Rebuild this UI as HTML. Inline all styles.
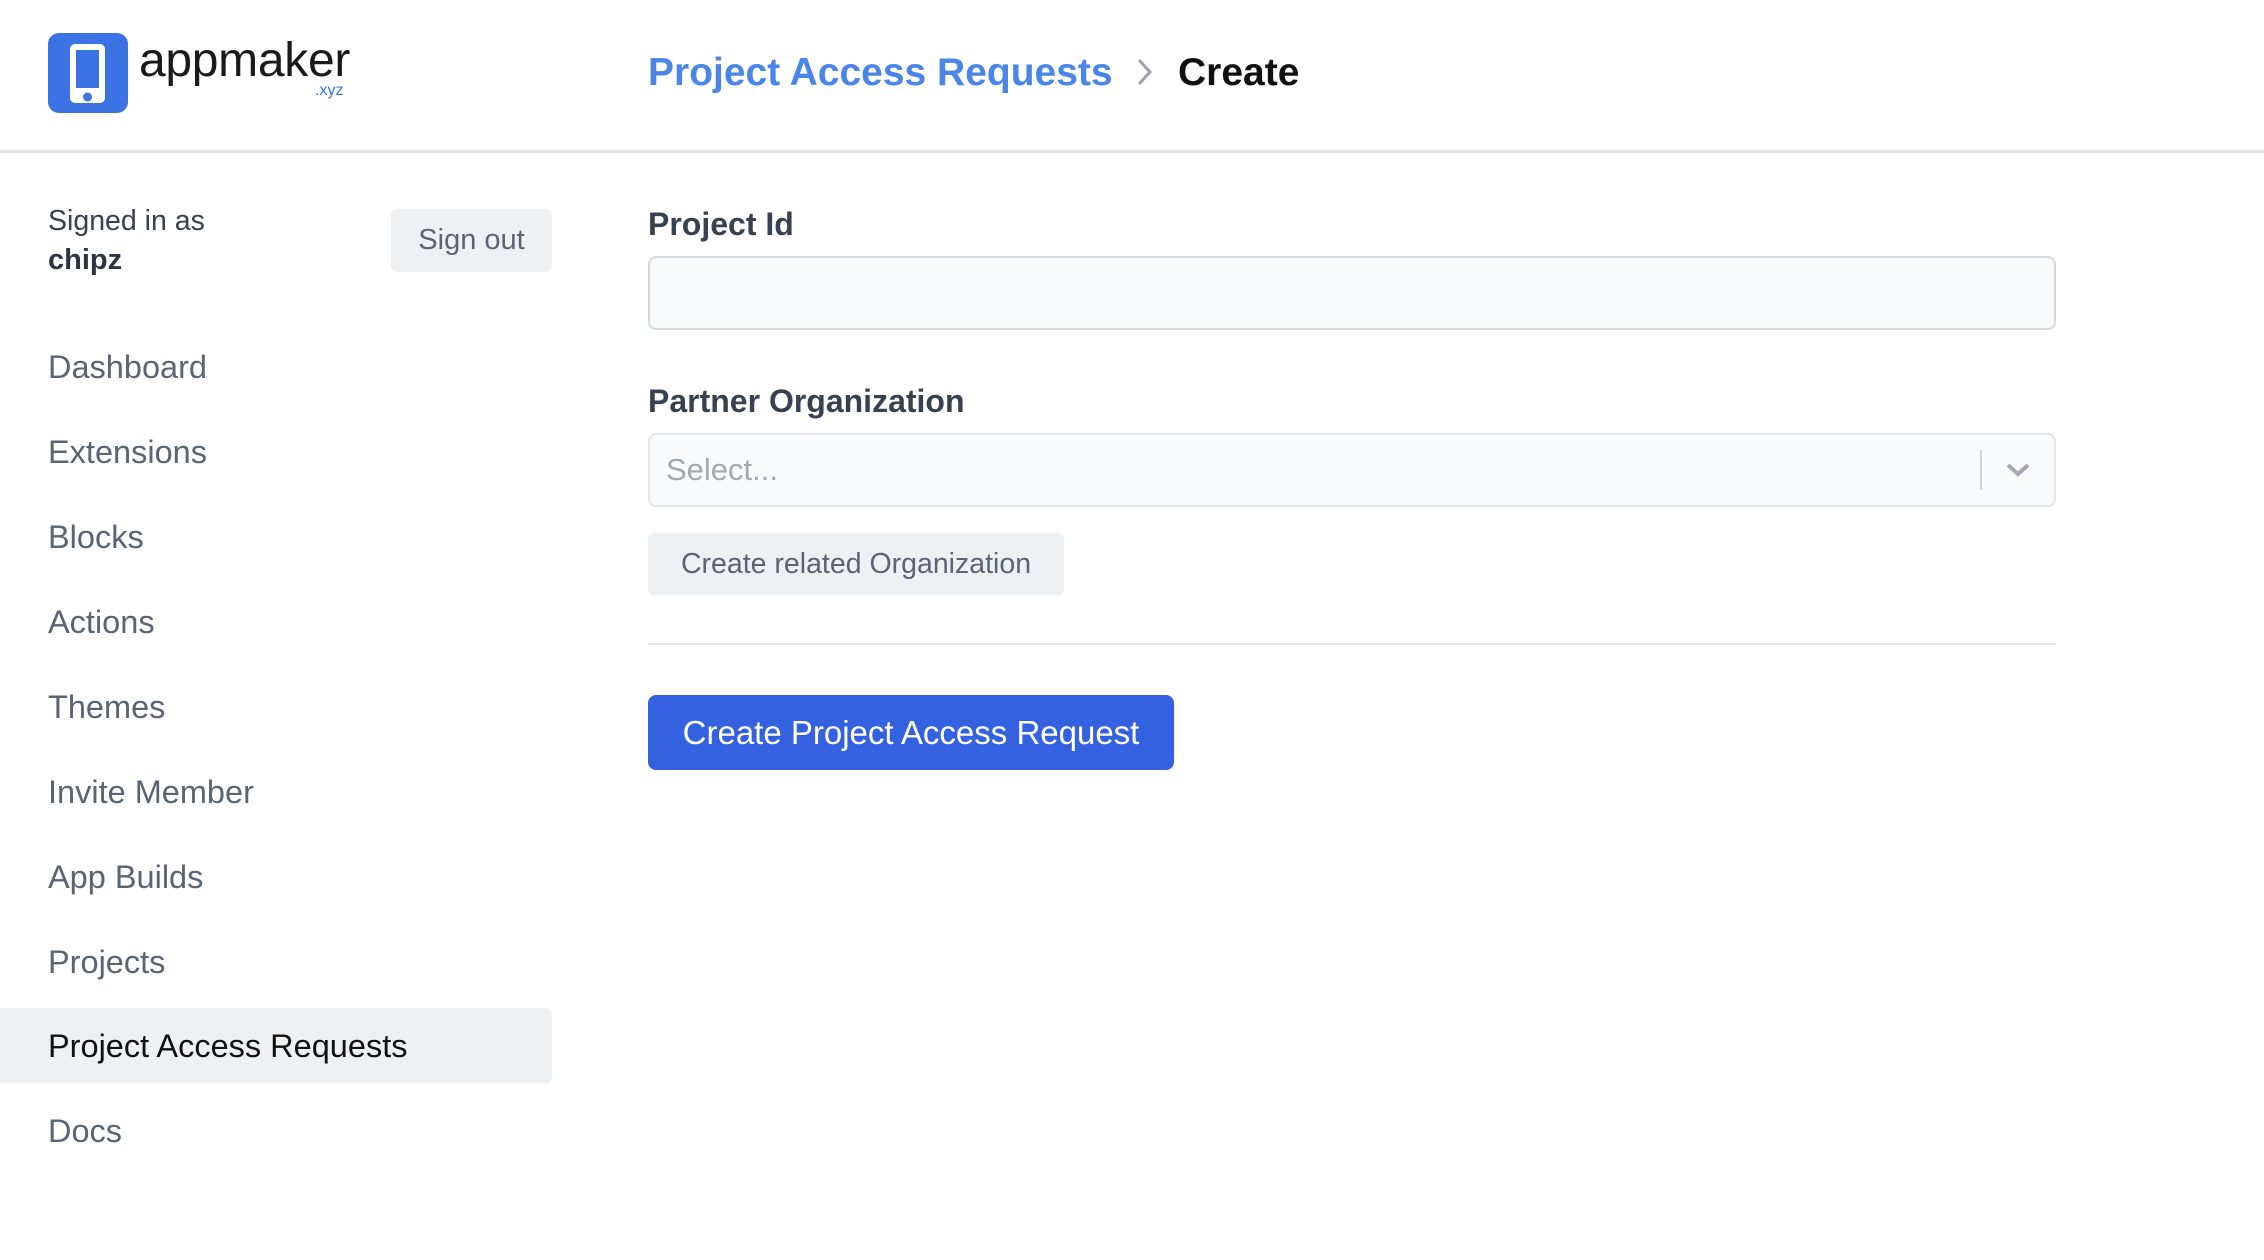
<!DOCTYPE html>
<html><head><meta charset="utf-8"><style>
*{box-sizing:border-box;margin:0;padding:0}
body{width:2264px;height:1260px;background:#fff;font-family:"Liberation Sans",sans-serif;position:relative;overflow:hidden;color:#1f2937}
.a{position:absolute}
.hdr{left:0;top:0;width:2264px;height:153px;border-bottom:3px solid #e2e5ea}
.nav{left:48px;font-size:32.5px;color:#5b6472;line-height:40px}
</style></head><body>
<div class="a hdr"></div>
<svg class="a" style="left:48px;top:33px" width="80" height="80" viewBox="0 0 80 80">
<rect x="0" y="0" width="80" height="80" rx="11" fill="#3b73e4"/>
<rect x="22" y="11" width="35" height="59" rx="5" fill="#fff"/>
<rect x="28" y="17" width="23" height="38" fill="#3b73e4"/>
<circle cx="39.5" cy="64" r="4.5" fill="#3b73e4"/>
</svg>
<div class="a" style="left:139px;top:33px;font-size:48px;color:#1a1a1a;letter-spacing:-0.3px">appmaker</div>
<div class="a" style="left:315px;top:82px;font-size:16px;color:#3b73e4">.xyz</div>
<div class="a" style="left:648px;top:51px;font-size:39px;font-weight:bold;color:#4a86ea">Project Access Requests</div>
<svg class="a" style="left:1134px;top:56px" width="22" height="32" viewBox="0 0 22 32"><path d="M5 4 L16 16 L5 28" stroke="#9aa1ab" stroke-width="3" fill="none"/></svg>
<div class="a" style="left:1178px;top:51px;font-size:39px;font-weight:bold;color:#111">Create</div>
<div class="a" style="left:48px;top:205px;font-size:28.5px;color:#374151">Signed in as</div>
<div class="a" style="left:48px;top:244px;font-size:29px;font-weight:bold;color:#2d3543">chipz</div>
<div class="a" style="left:391px;top:209px;width:161px;height:63px;background:#eef1f4;border-radius:6px;font-size:29px;color:#5b6472;text-align:center;line-height:63px">Sign out</div>
<div class="a" style="left:0;top:1008px;width:552px;height:75px;background:#eef1f4;border-radius:0 6px 6px 0"></div>
<div class="a nav" style="top:347px">Dashboard</div>
<div class="a nav" style="top:432px">Extensions</div>
<div class="a nav" style="top:517px">Blocks</div>
<div class="a nav" style="top:602px">Actions</div>
<div class="a nav" style="top:687px">Themes</div>
<div class="a nav" style="top:772px">Invite Member</div>
<div class="a nav" style="top:857px">App Builds</div>
<div class="a nav" style="top:942px">Projects</div>
<div class="a nav" style="top:1026px;color:#111">Project Access Requests</div>
<div class="a nav" style="top:1111px">Docs</div>
<div class="a" style="left:648px;top:206px;font-size:32px;font-weight:bold;color:#374151">Project Id</div>
<div class="a" style="left:648px;top:256px;width:1408px;height:74px;border:2px solid #d5d9df;border-radius:8px;background:#f9fafb"></div>
<div class="a" style="left:648px;top:383px;font-size:32px;font-weight:bold;color:#374151">Partner Organization</div>
<div class="a" style="left:648px;top:433px;width:1408px;height:74px;border:2px solid #e2e5ea;border-radius:8px;background:#f9fafb"></div>
<div class="a" style="left:666px;top:452px;font-size:31px;color:#a3a9b2">Select...</div>
<div class="a" style="left:1980px;top:450px;width:2px;height:40px;background:#cfd3d9"></div>
<svg class="a" style="left:2004px;top:460px" width="28" height="20" viewBox="0 0 28 20"><path d="M4 5 L14 14 L24 5" stroke="#a3a9b2" stroke-width="4" fill="none"/></svg>
<div class="a" style="left:648px;top:533px;width:416px;height:62px;background:#eef1f4;border-radius:6px;font-size:28.5px;color:#5b6472;text-align:center;line-height:62px">Create related Organization</div>
<div class="a" style="left:648px;top:643px;width:1408px;height:2px;background:#e2e5ea"></div>
<div class="a" style="left:648px;top:695px;width:526px;height:75px;background:#3461e0;border-radius:8px;font-size:33px;color:#fff;text-align:center;line-height:75px">Create Project Access Request</div>
</body></html>
